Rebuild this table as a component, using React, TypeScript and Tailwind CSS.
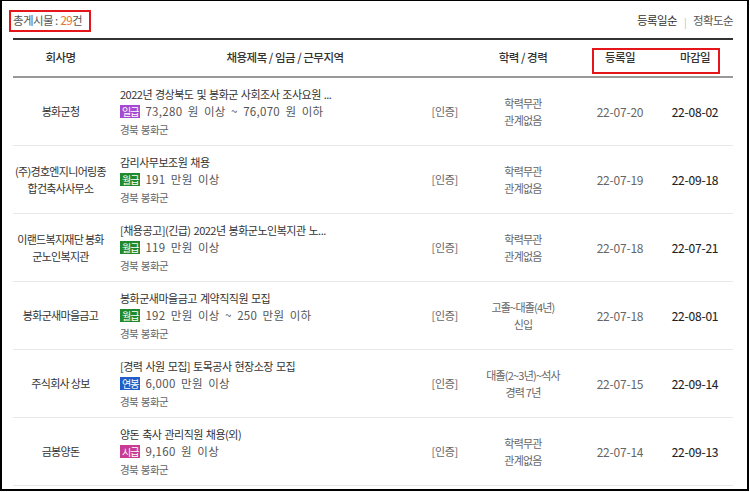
import React from "react";

type Pay = "일급" | "월급" | "연봉" | "시급";

interface Job {
  company: string[];
  title: string;
  pay: Pay;
  amount: string;
  place: string;
  edu: string[];
  reg: string;
  due: string;
}

const payColor: Record<Pay, string> = {
  일급: "bg-[#a54bd3]",
  월급: "bg-[#1f8a2e]",
  연봉: "bg-[#1f5ec6]",
  시급: "bg-[#c83c95]",
};

const jobs: Job[] = [
  {
    company: ["봉화군청"],
    title: "2022년 경상북도 및 봉화군 사회조사 조사요원 ...",
    pay: "일급",
    amount: "73,280 원 이상 ~ 76,070 원 이하",
    place: "경북 봉화군",
    edu: ["학력무관", "관계없음"],
    reg: "22-07-20",
    due: "22-08-02",
  },
  {
    company: ["(주)경호엔지니어링종", "합건축사사무소"],
    title: "감리사무보조원 채용",
    pay: "월급",
    amount: "191 만원 이상",
    place: "경북 봉화군",
    edu: ["학력무관", "관계없음"],
    reg: "22-07-19",
    due: "22-09-18",
  },
  {
    company: ["이랜드복지재단 봉화", "군노인복지관"],
    title: "[채용공고](긴급) 2022년 봉화군노인복지관 노...",
    pay: "월급",
    amount: "119 만원 이상",
    place: "경북 봉화군",
    edu: ["학력무관", "관계없음"],
    reg: "22-07-18",
    due: "22-07-21",
  },
  {
    company: ["봉화군새마을금고"],
    title: "봉화군새마을금고 계약직직원 모집",
    pay: "월급",
    amount: "192 만원 이상 ~ 250 만원 이하",
    place: "경북 봉화군",
    edu: ["고졸~대졸(4년)", "신입"],
    reg: "22-07-18",
    due: "22-08-01",
  },
  {
    company: ["주식회사 상보"],
    title: "[경력 사원 모집] 토목공사 현장소장 모집",
    pay: "연봉",
    amount: "6,000 만원 이상",
    place: "경북 봉화군",
    edu: ["대졸(2~3년)~석사", "경력 7년"],
    reg: "22-07-15",
    due: "22-09-14",
  },
  {
    company: ["금봉양돈"],
    title: "양돈 축사 관리직원 채용(외)",
    pay: "시급",
    amount: "9,160 원 이상",
    place: "경북 봉화군",
    edu: ["학력무관", "관계없음"],
    reg: "22-07-14",
    due: "22-09-13",
  },
];

const cols = "grid grid-cols-[95px_354px_122px_72px_78px]";

function Row({ job }: { job: Job }) {
  return (
    <div className={`${cols} h-[68px] border-b border-[#e8e8e8] items-center`}>
      <div className="text-center text-[11px] leading-[17px] tracking-[-0.7px] text-[#333] whitespace-nowrap">
        {job.company.map((c) => (
          <div key={c}>{c}</div>
        ))}
      </div>
      <div className="flex items-center pl-[12px] pr-[4px]">
        <div className="flex-1 flex flex-col">
          <div className="text-[11px] leading-[18px] tracking-[-0.5px] [word-spacing:1px] text-[#333] whitespace-nowrap">
            {job.title}
          </div>
          <div className="flex items-center h-[18px] gap-[5px]">
            <span className={`${payColor[job.pay]} text-white text-[10px] leading-[13px] tracking-[-1px] px-[2px] h-[13px]`}>
              {job.pay}
            </span>
            <span className="text-[11.5px] tracking-[0.3px] [word-spacing:2.5px] text-[#555] whitespace-nowrap">{job.amount}</span>
          </div>
          <div className="text-[10.5px] leading-[18px] tracking-[-0.6px] [word-spacing:1px] text-[#666]">{job.place}</div>
        </div>
        <div className="text-[11px] tracking-[-0.3px] text-[#666]">[인증]</div>
      </div>
      <div className="text-center text-[11px] leading-[17px] tracking-[-0.8px] text-[#666] whitespace-nowrap">
        {job.edu.map((e) => (
          <div key={e}>{e}</div>
        ))}
      </div>
      <div className="text-center text-[12px] tracking-[-0.2px] text-[#666]">{job.reg}</div>
      <div className="text-center text-[12px] tracking-[-0.2px] text-[#222] [-webkit-text-stroke:0.1px_#222]">{job.due}</div>
    </div>
  );
}

export default function App() {
  return (
    <div
      className="w-[750px] h-[492px] bg-white"
      style={{ fontFamily: '"Noto Sans CJK KR", "Noto Sans", sans-serif' }}
    >
      <div className="w-[749px] h-[491px] border-t border-l-2 border-r-2 border-b-2 border-black pl-[11px] pr-[14px] flex flex-col overflow-hidden">
        <div className="h-[37px] flex items-start justify-between pt-[9px]">
          <div className="-ml-[4px] w-[82px] h-[22px] border-2 border-[#e5161b] flex items-center pl-[2px] text-[11.5px] tracking-[-0.6px] text-[#555]">
            총게시물 : <span className="text-[#e8762d] ml-[3px]">29</span>건
          </div>
          <div className="flex items-center h-[22px] text-[11.5px] tracking-[-0.6px]">
            <span className="text-[#333]">등록일순</span>
            <span className="mx-[7px] text-[10px] text-[#bbb]">|</span>
            <span className="text-[#555]">정확도순</span>
          </div>
        </div>
        <div className="border-t-2 border-[#333]">
          <div className={`${cols} h-[38px] items-center border-b-2 border-[#999] text-[11.5px] tracking-[-0.5px] text-[#333] font-medium relative`}>
            <div className="text-center">회사명</div>
            <div className="text-center">채용제목 / 임금 / 근무지역</div>
            <div className="text-center">학력 / 경력</div>
            <div className="text-center">등록일</div>
            <div className="text-center">마감일</div>
            <div className="absolute left-[579px] top-[8px] w-[128px] h-[26px] border-2 border-[#e5161b]" />
          </div>
          {jobs.map((j) => (
            <Row key={j.reg + j.due + j.title} job={j} />
          ))}
        </div>
      </div>
    </div>
  );
}
